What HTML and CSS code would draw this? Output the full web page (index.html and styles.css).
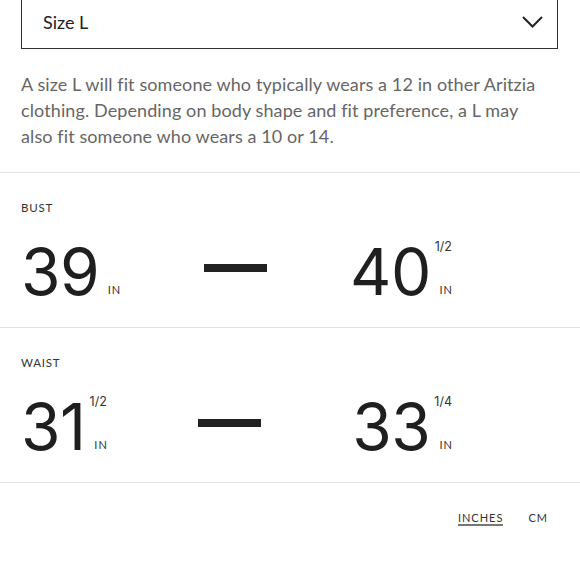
FILE: index.html
```html
<!DOCTYPE html>
<html lang="en">
<head>
<meta charset="utf-8">
<title>Size L</title>
<link rel="stylesheet" href="styles.css">
</head>
<body>
<div class="top">
  <div class="select">
    <span class="select-text">Size L</span>
    <svg class="chevron" width="21" height="12" viewBox="0 0 21 12"><polyline points="1,1 10.5,10.5 20,1" fill="none" stroke="#222" stroke-width="2"/></svg>
  </div>
  <p class="desc">A size L will fit someone who typically wears a 12 in other Aritzia clothing. Depending on body shape and fit preference, a L may also fit someone who wears a 10 or 14.</p>
</div>
<section class="measure">
  <div class="label">BUST</div>
  <div class="range">
    <div class="val"><span class="num">39</span><span class="units"><span class="frac"></span><span class="unit">IN</span></span></div>
    <div class="dash"></div>
    <div class="val"><span class="num">40</span><span class="units"><span class="frac">1/2</span><span class="unit">IN</span></span></div>
  </div>
</section>
<section class="measure">
  <div class="label">WAIST</div>
  <div class="range">
    <div class="val"><span class="num">31</span><span class="units"><span class="frac">1/2</span><span class="unit">IN</span></span></div>
    <div class="dash"></div>
    <div class="val"><span class="num">33</span><span class="units"><span class="frac">1/4</span><span class="unit">IN</span></span></div>
  </div>
</section>
<div class="toggle">
  <span class="opt active">INCHES</span>
  <span class="opt">CM</span>
</div>
</body>
</html>
```
FILE: styles.css
```css
html, body {
  margin: 0;
  padding: 0;
  background: #fff;
}
body {
  font-family: Lato, "Noto Sans", sans-serif;
  color: #222;
}
.top {
  padding: 0 22px 0 21px;
}
.select {
  margin-top: -8px;
  border: 1px solid #333;
  display: flex;
  align-items: center;
  justify-content: space-between;
  padding: 3px 14px 0 21px;
  box-sizing: content-box;
  height: 52px;
}
.select-text {
  font-size: 18px;
  color: #222;
}
.chevron {
  display: block;
  margin-top: 0;
}
.desc {
  margin: 22px 0 0;
  padding-bottom: 23px;
  max-width: 525px;
  font-size: 18px;
  line-height: 26px;
  letter-spacing: 0.1px;
  color: #666;
}
.measure {
  border-top: 1px solid #e2e2e2;
  padding: 28px 0 23px 21px;
}
.label {
  font-size: 11.5px;
  line-height: 14px;
  letter-spacing: 0.8px;
  color: #333;
}
.range {
  margin-top: 25px;
  width: 431px;
  display: flex;
  align-items: center;
  justify-content: space-between;
}
.val {
  display: flex;
  height: 64px;
}
.num {
  font-family: Inter, "Liberation Sans", sans-serif;
  font-size: 64px;
  line-height: 64px;
  color: #1f1f1f;
  letter-spacing: -0.5px;
}
.units {
  display: flex;
  flex-direction: column;
  justify-content: space-between;
  align-items: flex-end;
  min-width: 17px;
  margin-left: 4px;
}
.frac {
  font-family: Inter, "Liberation Sans", sans-serif;
  font-size: 12.5px;
  line-height: 12px;
  margin-top: 1px;
  color: #333;
}
.unit {
  font-size: 11px;
  line-height: 10px;
  letter-spacing: 1px;
  margin-bottom: 9px;
  margin-right: -1px;
  color: #333;
}
.dash {
  width: 63px;
  height: 8px;
  background: #222;
  margin-bottom: 8px;
}
.toggle {
  border-top: 1px solid #e2e2e2;
  padding: 28px 32px 0 0;
  display: flex;
  align-items: flex-start;
  justify-content: flex-end;
  gap: 25px;
}
.opt {
  display: block;
  font-size: 11px;
  line-height: 14px;
  letter-spacing: 1px;
  color: #333;
}
.opt.active {
  border-bottom: 2px solid #777;
  line-height: 13px;
  padding-bottom: 0;
}
```
